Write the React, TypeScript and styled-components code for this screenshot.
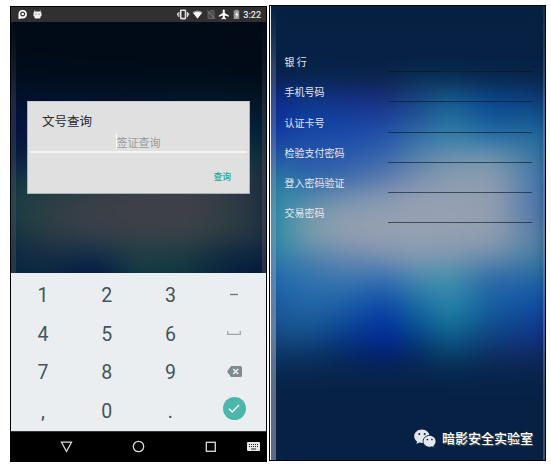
import React from "react";
import styled, { createGlobalStyle } from "styled-components";

const CJK = '"Noto Sans CJK SC", sans-serif';

const GlobalStyle = createGlobalStyle`
  * { box-sizing: border-box; }
  body { margin: 0; background: #fff; font-family: Roboto, ${CJK}; overflow: hidden; }
`;

type Band = string[];

const NIGHT = "#062143";

/* Horizontal colour bands of the wallpaper, top to bottom. */
const formBands: Band[] = [
  [NIGHT, NIGHT],
  [NIGHT, NIGHT],
  ["#062145", "#062042", "#062042"],
  ["#0a2154", "#07254f", "#092550", "#0b244b", "#0a3055", "#0a2e55", "#08294d", "#07254a"],
  ["#0e2a88", "#0c3784", "#142f84", "#1b2d7a", "#174480", "#185a8c", "#0a438a", "#0d3b74"],
  ["#0e309c", "#10409c", "#133f9f", "#1d419c", "#205597", "#22709c", "#105598", "#15568c"],
  ["#1541a6", "#1b4ba8", "#1c4caa", "#2455a8", "#3670a8", "#3a83a8", "#2f72a8", "#246c9c"],
  ["#235ca7", "#2857a8", "#2b5caa", "#3a67ac", "#5681ab", "#6c92ac", "#7294ad", "#30709f"],
  ["#267aa5", "#3068aa", "#406cac", "#5d7aae", "#7a8dae", "#8b9ab0", "#8c9cb0", "#3871aa"],
  ["#2c8aa5", "#5088aa", "#7490ae", "#8698b0", "#939eb1", "#959fb1", "#919eb0", "#3c70aa"],
  ["#308ca8", "#789aab", "#909eb0", "#959fb1", "#96a0b2", "#96a0b2", "#929eb0", "#456fa8"],
  ["#308ca8", "#7498ab", "#8e9db0", "#959fb2", "#95a0b2", "#949fb1", "#8f9db0", "#4a7ba5"],
  ["#2a7fa9", "#4e82ae", "#6587af", "#748eb0", "#7f98b0", "#7896ae", "#688aad", "#357a9f"],
  ["#236bac", "#3272ad", "#3e78b0", "#3a70b0", "#4788ae", "#4892ad", "#2e6aa9", "#2466a2"],
  ["#1c5da6", "#266aab", "#2065aa", "#1652aa", "#2472a8", "#2d88a9", "#1b62a5", "#1151a4"],
  ["#1a5696", "#1c5f98", "#134f9e", "#0638a4", "#0b5a98", "#1b7b9f", "#105394", "#0e3f98"],
  ["#144880", "#144a82", "#083984", "#022897", "#063e82", "#0c5c87", "#113f7e", "#112f83"],
  ["#0b3261", "#0b315e", "#06285e", "#041f68", "#06285a", "#083b62", "#0b2c5a", "#11275f"],
  ["#07254a", "#07254a", "#062349"],
  [NIGHT, NIGHT],
  [NIGHT, NIGHT],
  [NIGHT, NIGHT],
  [NIGHT, NIGHT],
];

const dialogBands: Band[] = [
  ["#010b18", "#010a16"],
  ["#010b18", "#010a16"],
  ["#010c1b", "#010b18"],
  ["#02102a", "#021126", "#021322", "#02101f"],
  ["#041138", "#031634", "#051330", "#052038", "#04182d"],
  ["#05133f", "#06183f", "#08203b", "#062238"],
  ["#06183f", "#0b2643", "#16303c", "#0c2e3c"],
  ["#0e3044", "#1a3848", "#333c44", "#183240"],
  ["#153d46", "#2e3e44", "#3c4047", "#3c4047", "#1a2c42"],
  ["#173f46", "#303e44", "#3c3f48", "#3f4048", "#3f4048", "#303d44", "#1c2c42"],
  ["#103444", "#2c3c43", "#37404a", "#3a4045", "#3a4347", "#2f3c42", "#1a3042"],
  ["#0b2944", "#192f43", "#16314a", "#243e45", "#203c43", "#102b41", "#0b2644"],
  ["#092540", "#0b2842", "#041746", "#133d43", "#103740", "#07213e", "#06173d"],
  ["#07203c", "#09243e", "#02103f", "#08293c", "#08293c", "#06183a", "#030f36"],
];

/* Where the eight colours of a full band sit across the wallpaper. */
const STOP_POSITIONS = [5, 16, 28, 42, 53, 64, 79, 98];

function bandGradient(stops: Band) {
  const colours =
    stops.length === STOP_POSITIONS.length ? stops.map((c, i) => `${c} ${STOP_POSITIONS[i]}%`) : stops;
  return `linear-gradient(90deg, ${colours.join(", ")})`;
}

const Stage = styled.main`
  width: 551px;
  height: 465px;
  display: flex;
  align-items: flex-start;
  padding: 5px 0 0 10px;
  gap: 2px;
  overflow: hidden;
`;

const DialogPhone = styled.section`
  width: 257px;
  height: 456px;
  margin-top: 1px;
  border: 1px solid #000;
  border-bottom: 0;
  display: flex;
  flex-direction: column;
`;

const FormPhone = styled.section`
  width: 277px;
  height: 456px;
  border: 1px solid #000;
  position: relative;
  display: flex;
  flex-direction: column;
  overflow: hidden;
  background: ${NIGHT};
`;

const Wallpaper = styled.div<{ $top: number }>`
  position: absolute;
  inset: ${(p) => p.$top}px -8px 0;
  display: flex;
  flex-direction: column;
  filter: blur(10px);
`;

const BandRow = styled.div<{ $stops: Band }>`
  flex: 0 0 20px;
  background: ${(p) => bandGradient(p.$stops)};

  &:last-child {
    flex-basis: 50px;
  }
`;

const EdgeStrip = styled.div<{ $side: "left" | "right"; $width: number; $fill: string }>`
  position: absolute;
  top: 0;
  bottom: 0;
  ${(p) => p.$side}: 0;
  width: ${(p) => p.$width}px;
  background: ${(p) => p.$fill};
`;

const StatusBar = styled.header`
  height: 15px;
  flex: none;
  background: #303030;
  display: flex;
  align-items: center;
  justify-content: space-between;
  padding: 0 5px 0 7px;
`;

const StatusGroup = styled.div<{ $gap: number }>`
  display: flex;
  align-items: center;
  gap: ${(p) => p.$gap}px;
`;

const Clock = styled.span`
  font: 500 9px/15px Roboto, sans-serif;
  color: #e8e8e8;
  margin-left: 1px;
  padding-top: 1px;
`;

const Backdrop = styled.div`
  height: 251px;
  flex: none;
  position: relative;
  overflow: hidden;
  background: #010b18;
  padding: 79px 0 0 16px;
`;

const Dialog = styled.div`
  position: relative;
  width: 223px;
  height: 93px;
  background: #e0e0e0;
  border: 1px solid #aab1b6;
  border-top-color: #c8ccd0;
  display: flex;
  flex-direction: column;
  padding: 0 2px;
`;

const DialogTitle = styled.h1`
  margin: 9px 0 0 12px;
  font: 400 12.5px/20px ${CJK};
  color: #2a2a2a;
`;

const QueryField = styled.div`
  height: 22px;
  border-bottom: 2px solid #f5f5f5;
  display: flex;
  justify-content: center;
  padding-top: 3px;
`;

const Hint = styled.span`
  height: 15px;
  border-left: 1px solid #fff;
  font: 400 11px/16px ${CJK};
  color: #999;
  margin-right: 1px;
`;

const QueryButton = styled.button`
  align-self: flex-end;
  margin: 16px 16px 0 0;
  padding: 0;
  border: 0;
  background: none;
  font: 500 8.8px/16px ${CJK};
  color: #29a58f;
`;

const Keypad = styled.div`
  height: 159px;
  flex: none;
  background: #eaeef1;
  border-bottom: 1px solid #30363a;
  display: grid;
  grid-template-columns: repeat(4, 63.75px);
  grid-template-rows: repeat(4, 38.5px);
  padding-top: 4px;
`;

const Key = styled.div`
  display: flex;
  align-items: center;
  justify-content: center;
  font: 400 19.5px/38px Roboto, sans-serif;
  color: #42545c;

  > svg {
    margin-top: -3px;
  }
`;

const ActionKey = styled.div`
  width: 23px;
  height: 23px;
  margin-top: -6px;
  border-radius: 50%;
  background: #4db6ac;
  display: flex;
  align-items: center;
  justify-content: center;
`;

const NavBar = styled.nav`
  flex: 1;
  background: #000;
  display: grid;
  grid-template-columns: 20px 71px 72px 73px 13px;
  align-items: center;
  justify-items: center;
  padding-bottom: 1px;
`;

const NavIcon = styled.svg<{ $column: number }>`
  grid-column: ${(p) => p.$column};
  grid-row: 1;
  display: block;
`;

const Form = styled.form`
  position: relative;
  padding: 41px 13px 0 14.5px;
`;

const FieldRow = styled.label`
  height: 30.3px;
  display: flex;
  justify-content: space-between;
`;

const FieldName = styled.span`
  font: 400 10px/30px ${CJK};
  color: #e3e9f2;
  white-space: pre;
`;

const FieldLine = styled.span`
  width: 144px;
  height: 25px;
  border-bottom: 1px solid rgba(10, 22, 38, 0.62);
`;

const Watermark = styled.footer`
  position: relative;
  margin: auto 12px 9px auto;
  display: flex;
  align-items: center;
  gap: 6px;
  font: 500 13px/22px ${CJK};
  color: #fff;
  text-shadow: 1px 1px 1px #666;
`;

const WatermarkName = styled.span`
  padding-bottom: 2px;
`;

function WallpaperArt({ bands, top = 0 }: { bands: Band[]; top?: number }) {
  return (
    <Wallpaper $top={top}>
      {bands.map((stops, i) => (
        <BandRow key={i} $stops={stops} />
      ))}
    </Wallpaper>
  );
}

function StatusIcons() {
  return (
    <svg width="63" height="11" viewBox="0 0 63 11">
      <g fill="none" stroke="#ddd">
        <rect x="3.7" y="1.2" width="4.8" height="8.4" rx="0.6" strokeWidth="1.6" />
        <path d="M1.8 3v5M10.4 3v5M.5 4.3v2.2M11.6 4.3v2.2" strokeWidth="1.1" />
      </g>
      <path d="M15.5 3.2Q20.5 -.2 25.5 3.2L20.5 9.5z" fill="#999" />
      <path d="M16.2 4Q20.5 1.800 24.800 4L20.5 9.5z" fill="#fff" />
      <path d="M31 4l2.5-2.5H37v8h-6z" fill="#4a4a4a" stroke="#646464" />
      <path d="M30 1.5l8 8" stroke="#858585" />
      <path d="M46.800.6c.8 0 1 .6 1 1.300v2.100l4 2.500v1.300l-4-1.200v1.900l1.300.9v1l-2.300-.6-2.300.6v-1l1.300-.9V6.600l-4 1.200V6.500l4-2.500V1.900c0-.7.200-1.300 1-1.300z" fill="#fff" />
      <path d="M56.700 1.500h1.500V.7h2.600v.8h1.400V10h-5.500z" fill="#9a9a9a" />
      <path d="M60.3 2.5l-2 3.4h1.2v3l2-3.8h-1.2z" fill="#fff" />
    </svg>
  );
}

function NotificationIcons() {
  return (
    <svg width="24" height="11" viewBox="0 0 24 11">
      <path d="M.5 10V5A4.2 4.2 0 1 1 4.7 9.4H3L1.5 10z" fill="#fff" />
      <circle cx="4.7" cy="5" r="1.9" fill="none" stroke="#303030" strokeWidth="1.2" />
      <path d="M16.2 1l1.4 1.4h3.8L22.6 1v2.2l.9.3v3.4l-.9.4V8q0 1.6-1.6 1.6h-3q-1.7 0-1.7-1.6v-.7l-.8-.4V3.5l.8-.3z" fill="#eee" />
      <circle cx="18" cy="5" r=".6" fill="#555" />
      <circle cx="21" cy="5" r=".6" fill="#555" />
    </svg>
  );
}

function WeChatIcon() {
  return (
    <svg width="22" height="20" viewBox="0 0 22 20">
      <path d="M8 .6C3.700 .6.200 3.500.200 7.200c0 2.100 1.100 4 2.900 5.200L2.400 15l2.900-1.500c.9.300 1.800.4 2.900.4C12.300 13.900 15.500 11 15.500 7.300S12.200.6 8 .6z" fill="#e4e7eb" />
      <path d="M15.600 6.400c-3.600 0-6.500 2.600-6.500 5.900s2.900 5.900 6.500 5.900c.9 0 1.700-.1 2.400-.4l2.300 1.300-.6-2.200c1.500-1.100 2.300-2.700 2.300-4.600 0-3.300-2.900-5.900-6.400-5.900z" fill="#e4e7eb" stroke={NIGHT} strokeWidth=".9" />
      <g fill={NIGHT}>
        <circle cx="5.3" cy="5" r="1" />
        <circle cx="10.7" cy="5" r="1" />
        <circle cx="13.4" cy="10.500" r=".85" />
        <circle cx="17.900" cy="10.500" r=".85" />
      </g>
    </svg>
  );
}

const fields = ["银 行", "手机号码", "认证卡号", "检验支付密码", "登入密码验证", "交易密码"];

export default function App() {
  return (
    <Stage>
      <GlobalStyle />
      <DialogPhone>
        <StatusBar>
          <NotificationIcons />
          <StatusGroup $gap={2}>
            <StatusIcons />
            <Clock>3:22</Clock>
          </StatusGroup>
        </StatusBar>
        <Backdrop>
          <WallpaperArt bands={dialogBands} />
          <EdgeStrip
            $side="left"
            $width={5}
            $fill="linear-gradient(rgba(100,110,120,0) 0, rgba(90,100,115,.3) 80px, rgba(90,90,100,.35))"
          />
          <EdgeStrip
            $side="right"
            $width={4}
            $fill="linear-gradient(rgba(100,110,120,0) 0, rgba(90,100,115,.28) 80px, rgba(90,90,100,.38))"
          />
          <Dialog>
            <DialogTitle>文号查询</DialogTitle>
            <QueryField>
              <Hint>签证查询</Hint>
            </QueryField>
            <QueryButton>查询</QueryButton>
          </Dialog>
        </Backdrop>
        <Keypad>
          <Key>1</Key>
          <Key>2</Key>
          <Key>3</Key>
          <Key>
            <svg width="8" height="3" viewBox="0 0 8 3">
              <path d="M0 1.500h8" stroke="#65757b" strokeWidth="1.3" />
            </svg>
          </Key>
          <Key>4</Key>
          <Key>5</Key>
          <Key>6</Key>
          <Key>
            <svg width="14" height="5" viewBox="0 0 14 5">
              <path d="M.7 0v3.300h12.600V0" fill="none" stroke="#9ea9ad" strokeWidth="1.300" />
            </svg>
          </Key>
          <Key>7</Key>
          <Key>8</Key>
          <Key>9</Key>
          <Key>
            <svg width="15" height="11" viewBox="0 0 15 11">
              <path d="M4 0h9.500q1.500 0 1.500 1.500v8q0 1.500-1.500 1.500H4L0 5.500z" fill="#7e8c90" />
              <path d="M6.200 3l5 5M11.200 3l-5 5" stroke="#eef1f3" strokeWidth="1.500" />
            </svg>
          </Key>
          <Key>,</Key>
          <Key>0</Key>
          <Key>.</Key>
          <Key>
            <ActionKey>
              <svg width="12" height="9" viewBox="0 0 12 9">
                <path d="M1 4.800l3.200 3.100L11 1" fill="none" stroke="#fff" strokeWidth="1.400" />
              </svg>
            </ActionKey>
          </Key>
        </Keypad>
        <NavBar>
          <NavIcon $column={2} width="13" height="12" viewBox="0 0 13 12">
            <path d="M1.500 1.200h10L6.500 10.500z" fill="none" stroke="#ddd" strokeWidth="1.300" />
          </NavIcon>
          <NavIcon $column={3} width="13" height="13" viewBox="0 0 13 13">
            <circle cx="6.500" cy="6.500" r="5.200" fill="none" stroke="#ddd" strokeWidth="1.300" />
          </NavIcon>
          <NavIcon $column={4} width="12" height="12" viewBox="0 0 12 12">
            <rect x="1.300" y="1.300" width="9" height="9" fill="none" stroke="#ddd" strokeWidth="1.300" />
          </NavIcon>
          <NavIcon $column={5} width="13" height="9" viewBox="0 0 13 9">
            <rect width="13" height="9" rx="1" fill="#e8e8e8" />
            <path d="M2 2.500h9M2 4.500h9" stroke="#222" strokeDasharray="1 1" />
            <path d="M4 7h5" stroke="#222" />
          </NavIcon>
        </NavBar>
      </DialogPhone>
      <FormPhone>
        <WallpaperArt bands={formBands} top={2} />
        <EdgeStrip
          $side="left"
          $width={6}
          $fill="linear-gradient(rgba(160,170,190,0) 0, rgba(160,170,190,.25) 60px, rgba(170,180,205,.35) 240px, rgba(175,180,195,.5) 330px, rgba(175,180,195,.5))"
        />
        <EdgeStrip $side="left" $width={1} $fill="#e8edf2" />
        <EdgeStrip $side="right" $width={2} $fill="linear-gradient(rgba(150,170,200,.1), rgba(150,170,200,.35) 100px)" />
        <Form>
          {fields.map((name) => (
            <FieldRow key={name}>
              <FieldName>{name}</FieldName>
              <FieldLine />
            </FieldRow>
          ))}
        </Form>
        <Watermark>
          <WeChatIcon />
          <WatermarkName>暗影安全实验室</WatermarkName>
        </Watermark>
      </FormPhone>
    </Stage>
  );
}
